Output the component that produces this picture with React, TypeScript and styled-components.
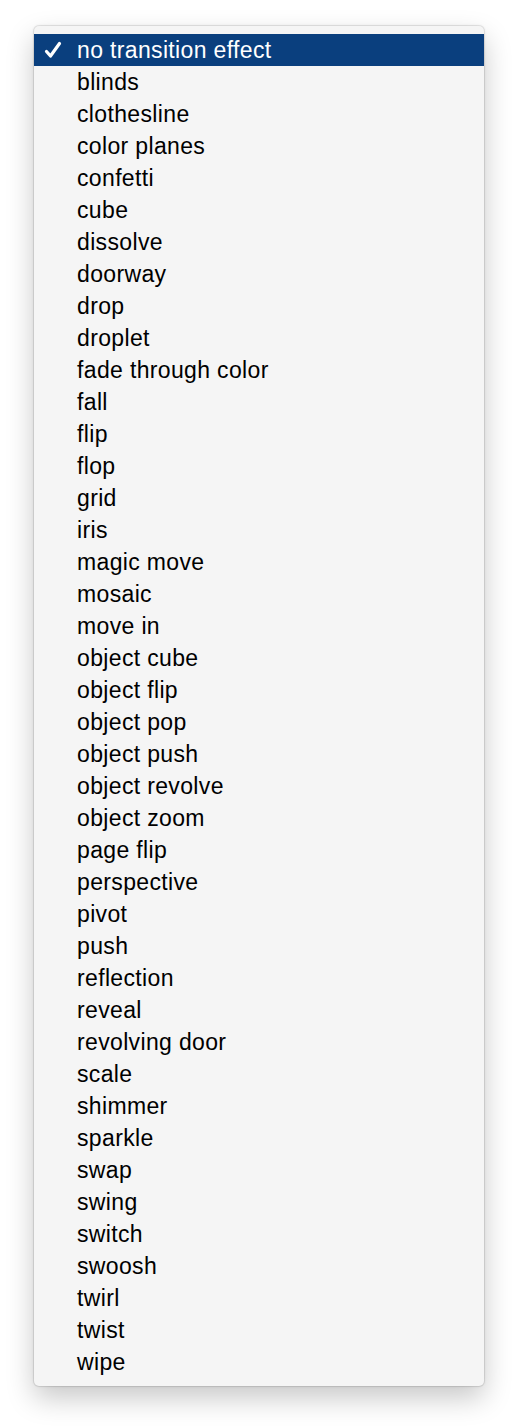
import { createGlobalStyle, styled } from "styled-components";

const Global = createGlobalStyle`
  body {
    margin: 0;
    background: #ffffff;
    font-family: "Liberation Sans", Arial, sans-serif;
  }
`;

const Page = styled.div`
  padding: 26px 34px 42px 34px;
`;

const Menu = styled.ul`
  list-style: none;
  margin: 0;
  padding: 8px 0;
  width: 450px;
  box-sizing: border-box;
  background: #f5f5f5;
  border-radius: 5px;
  box-shadow: 0 0 0 1px rgba(0, 0, 0, 0.07), 0 12px 28px rgba(0, 0, 0, 0.22),
    0 0 3px rgba(0, 0, 0, 0.12);
`;

const Item = styled.li<{ $selected?: boolean }>`
  position: relative;
  height: 32px;
  display: flex;
  align-items: center;
  padding-left: 43px;
  font-size: 23px;
  letter-spacing: 0.35px;
  color: ${(p) => (p.$selected ? "#ffffff" : "#000000")};
  background: ${(p) => (p.$selected ? "#0a3f7e" : "transparent")};
  white-space: nowrap;
`;

const Check = styled.svg`
  position: absolute;
  left: 10px;
  top: 7px;
`;

const effects = [
  "no transition effect",
  "blinds",
  "clothesline",
  "color planes",
  "confetti",
  "cube",
  "dissolve",
  "doorway",
  "drop",
  "droplet",
  "fade through color",
  "fall",
  "flip",
  "flop",
  "grid",
  "iris",
  "magic move",
  "mosaic",
  "move in",
  "object cube",
  "object flip",
  "object pop",
  "object push",
  "object revolve",
  "object zoom",
  "page flip",
  "perspective",
  "pivot",
  "push",
  "reflection",
  "reveal",
  "revolving door",
  "scale",
  "shimmer",
  "sparkle",
  "swap",
  "swing",
  "switch",
  "swoosh",
  "twirl",
  "twist",
  "wipe",
];

export default function App() {
  const selected = 0;
  return (
    <Page>
      <Global />
      <Menu>
        {effects.map((name, i) => (
          <Item key={name} $selected={i === selected}>
            {i === selected && (
              <Check width="18" height="18" viewBox="0 0 18 18">
                <path
                  d="M2.5 10.5 L6.5 15 L15.5 2.5"
                  fill="none"
                  stroke="#ffffff"
                  strokeWidth="3.2"
                  strokeLinecap="round"
                  strokeLinejoin="round"
                />
              </Check>
            )}
            {name}
          </Item>
        ))}
      </Menu>
    </Page>
  );
}
